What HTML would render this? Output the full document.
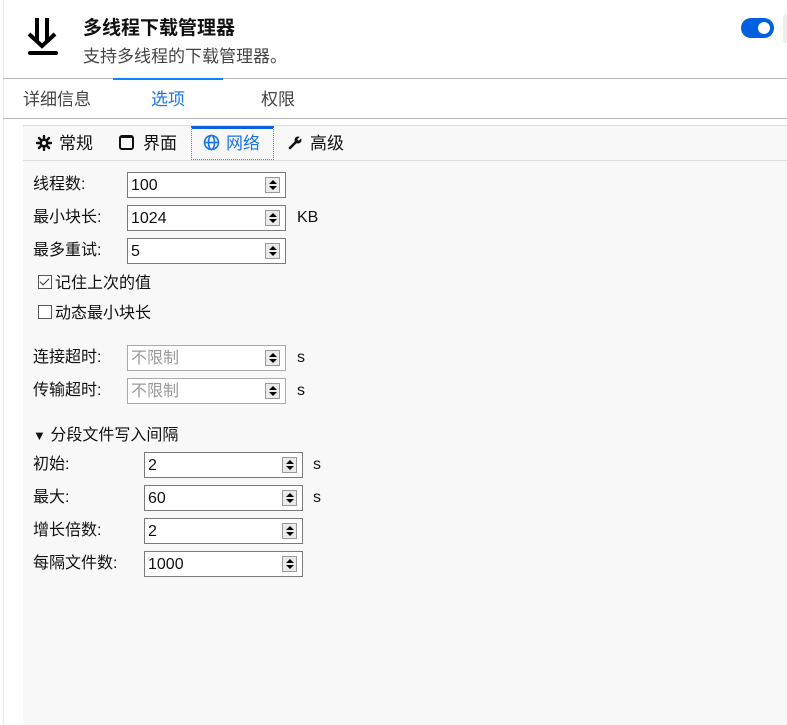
<!DOCTYPE html>
<html><head><meta charset="utf-8"><style>
*{box-sizing:border-box;margin:0;padding:0}
body{width:787px;height:725px;background:#fff;position:relative;overflow:hidden;font-family:"Liberation Sans","Noto Sans CJK SC",sans-serif;color:#111;font-size:16px}
.a{position:absolute;white-space:nowrap}
.in{position:absolute;height:26px;border:1px solid #7a7a7a;background:#fff;font-size:16px;line-height:26px;padding-left:3px}
.sp{position:absolute;right:5px;top:4px;width:15px;height:16px;border:1px solid #999;background:#eaeaea}
.sp:before{content:"";position:absolute;left:3px;top:2px;border:4px solid transparent;border-bottom:4px solid #000;border-top:0}
.sp:after{content:"";position:absolute;left:3px;top:8px;border:4px solid transparent;border-top:4px solid #000;border-bottom:0}
.lb{position:absolute;font-size:16px;line-height:20px}
.cb{display:inline-block;width:14px;height:14px;border:1px solid #555;vertical-align:-1px;margin-right:3px;position:relative;background:#fff}
</style></head><body>
<div class="a" style="left:3px;top:0;width:1px;height:725px;background:#e6e6e6"></div>
<svg class="a" style="left:26px;top:16px" width="34" height="42" viewBox="0 0 34 42"><path d="M11 2v24M21 2v24M3 18l13 12 13-12" fill="none" stroke="#000" stroke-width="4"/><rect x="2" y="35" width="30" height="4" rx="2" fill="#000"/></svg>
<div class="a" style="left:83px;top:17px;font-size:19px;line-height:24px;font-weight:bold">多线程下载管理器</div>
<div class="a" style="left:83px;top:45px;font-size:17px;line-height:24px;color:#444">支持多线程的下载管理器。</div>
<div class="a" style="left:741px;top:18px;width:33px;height:20px;border-radius:10px;background:#0061e0"></div>
<div class="a" style="left:758px;top:22px;width:12px;height:12px;border-radius:6px;background:#fff"></div>
<div class="a" style="left:783px;top:14px;width:6px;height:29px;border-radius:3px;background:#eee"></div>
<div class="a" style="left:3px;top:78px;width:784px;height:1px;background:#b8b8b8"></div>
<div class="a" style="left:113px;top:78px;width:110px;height:2px;background:#0a84ff"></div>
<div class="a" style="left:23px;top:88px;font-size:17px;line-height:24px;color:#444">详细信息</div>
<div class="a" style="left:151px;top:88px;font-size:17px;line-height:24px;color:#1a73e8">选项</div>
<div class="a" style="left:261px;top:88px;font-size:17px;line-height:24px;color:#444">权限</div>
<div class="a" style="left:3px;top:118px;width:784px;height:1px;background:#b8b8b8"></div>
<div class="a" style="left:23px;top:125px;width:764px;height:600px;background:#f8f8f8;border-top:1px solid #ddd"></div>
<div class="a" style="left:23px;top:160px;width:764px;height:1px;background:#ddd"></div>
<div class="a" style="left:191px;top:126px;width:83px;height:34px;border:1px dotted #5a7fb5;border-top:3px solid #0a60dd"></div>
<svg class="a" style="left:36px;top:135px" width="16" height="16" viewBox="0 0 16 16"><g stroke="#111" stroke-width="2.4" stroke-linecap="round"><path d="M8 1v14M1 8h14M3 3l10 10M13 3L3 13"/></g><circle cx="8" cy="8" r="4.5" fill="#111"/><circle cx="8" cy="8" r="2" fill="#f8f8f8"/></svg>
<div class="a" style="left:59px;top:132px;font-size:17px;line-height:24px">常规</div>
<div class="a" style="left:119px;top:135px;width:15px;height:15px;border:2px solid #111;border-radius:3px;border-top-width:3px"></div>
<div class="a" style="left:143px;top:132px;font-size:17px;line-height:24px">界面</div>
<svg class="a" style="left:203px;top:134px" width="17" height="17" viewBox="0 0 17 17"><g fill="none" stroke="#1a73e8" stroke-width="1.6"><circle cx="8.5" cy="8.5" r="7"/><ellipse cx="8.5" cy="8.5" rx="3" ry="7"/><path d="M1.5 8.5h14"/></g></svg>
<div class="a" style="left:226px;top:132px;font-size:17px;line-height:24px;color:#1a73e8">网络</div>
<svg class="a" style="left:288px;top:135px" width="15" height="15" viewBox="0 0 15 15"><path d="M2 13l6-6" stroke="#111" stroke-width="2.6" stroke-linecap="round"/><circle cx="10" cy="5" r="3.5" fill="#111"/><path d="M10 5l4-4" stroke="#f8f8f8" stroke-width="2"/></svg>
<div class="a" style="left:310px;top:132px;font-size:17px;line-height:24px">高级</div>

<div class="lb" style="left:33px;top:175px">线程数:</div>
<div class="in" style="left:127px;top:172px;width:159px">100<div class="sp"></div></div>
<div class="lb" style="left:33px;top:208px">最小块长:</div>
<div class="in" style="left:127px;top:205px;width:159px">1024<div class="sp"></div></div>
<div class="lb" style="left:297px;top:208px">KB</div>
<div class="lb" style="left:33px;top:241px">最多重试:</div>
<div class="in" style="left:127px;top:238px;width:159px">5<div class="sp"></div></div>
<div class="lb" style="left:38px;top:274px"><span class="cb"><span style="position:absolute;left:3px;top:0px;width:5px;height:9px;border:solid #333;border-width:0 1.5px 1.5px 0;transform:rotate(45deg)"></span></span>记住上次的值</div>
<div class="lb" style="left:38px;top:304px"><span class="cb"></span>动态最小块长</div>
<div class="lb" style="left:33px;top:348px">连接超时:</div>
<div class="in" style="left:127px;top:345px;width:159px;border-color:#aaa;color:#999">不限制<div class="sp"></div></div>
<div class="lb" style="left:297px;top:348px">s</div>
<div class="lb" style="left:33px;top:381px">传输超时:</div>
<div class="in" style="left:127px;top:378px;width:159px;border-color:#aaa;color:#999">不限制<div class="sp"></div></div>
<div class="lb" style="left:297px;top:381px">s</div>
<div class="lb" style="left:33px;top:426px"><span style="font-size:13px">▼</span> 分段文件写入间隔</div>
<div class="lb" style="left:33px;top:455px">初始:</div>
<div class="in" style="left:144px;top:452px;width:159px">2<div class="sp"></div></div>
<div class="lb" style="left:313px;top:455px">s</div>
<div class="lb" style="left:33px;top:488px">最大:</div>
<div class="in" style="left:144px;top:485px;width:159px">60<div class="sp"></div></div>
<div class="lb" style="left:313px;top:488px">s</div>
<div class="lb" style="left:33px;top:521px">增长倍数:</div>
<div class="in" style="left:144px;top:518px;width:159px">2<div class="sp"></div></div>
<div class="lb" style="left:33px;top:554px">每隔文件数:</div>
<div class="in" style="left:144px;top:551px;width:159px">1000<div class="sp"></div></div>
</body></html>
